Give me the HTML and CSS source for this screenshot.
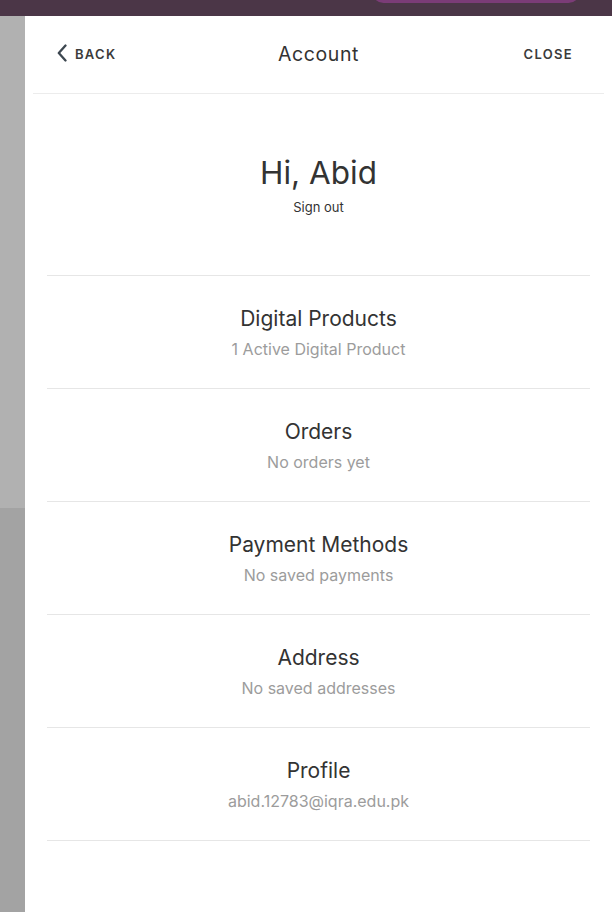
FILE: index.html
```html
<!DOCTYPE html>
<html lang="en">
<head>
    <meta charset="UTF-8">
    <meta name="viewport" content="width=device-width, initial-scale=1.0">
    <title>Account</title>

    <link rel="stylesheet" href="styles.css">
</head>
<body>
    <div class="topbar">
        <div class="topbar-pill"></div>
    </div>

    <div class="layout">
        <div class="backdrop">
            <div class="backdrop-top"></div>
            <div class="backdrop-bottom"></div>
        </div>

        <div class="panel">
            <div class="panel-header">
                <a class="nav-link back" href="#">
                    <svg class="chevron" width="10" height="18" viewBox="0 0 10 18">
                        <path d="M8.5 1.5 L1.8 9 L8.5 16.5" fill="none" stroke="#3d4750" stroke-width="2.3" stroke-linecap="round" stroke-linejoin="round"/>
                    </svg>
                    BACK
                </a>
                <h2 class="panel-title">Account</h2>
                <a class="nav-link close" href="#">CLOSE</a>
            </div>

            <div class="greeting">
                <h1>Hi, Abid</h1>
                <a class="sign-out" href="#">Sign out</a>
            </div>

            <ul class="account-list">
                <li class="account-item">
                    <div class="item-title">Digital Products</div>
                    <div class="item-sub">1 Active Digital Product</div>
                </li>
                <li class="account-item">
                    <div class="item-title">Orders</div>
                    <div class="item-sub">No orders yet</div>
                </li>
                <li class="account-item">
                    <div class="item-title">Payment Methods</div>
                    <div class="item-sub">No saved payments</div>
                </li>
                <li class="account-item">
                    <div class="item-title">Address</div>
                    <div class="item-sub">No saved addresses</div>
                </li>
                <li class="account-item">
                    <div class="item-title">Profile</div>
                    <div class="item-sub">abid.12783@iqra.edu.pk</div>
                </li>
            </ul>
        </div>
    </div>
</body>
</html>
```

FILE: styles.css
```css
body {
    margin: 0;
    font-family: Inter, "Liberation Sans", sans-serif;
    color: #383838;
    background-color: #4b3647;
    height: 912px;
    overflow: hidden;
}

.topbar {
    height: 16px;
    background-color: #4b3647;
    position: relative;
}

.topbar-pill {
    position: absolute;
    left: 372px;
    top: -20px;
    width: 208px;
    height: 23px;
    border-radius: 12px;
    background-color: #7b3c77;
}

.layout {
    display: flex;
    height: 896px;
}

.backdrop {
    width: 25px;
    display: flex;
    flex-direction: column;
}

.backdrop-top {
    height: 492px;
    background-color: #b1b1b1;
}

.backdrop-bottom {
    flex: 1;
    background-color: #a3a3a3;
}

.panel {
    flex: 1;
    background-color: white;
}

/* three columns so the title stays centred on the panel */
.panel-header {
    display: grid;
    grid-template-columns: 1fr auto 1fr;
    align-items: center;
    height: 75px;
    padding-bottom: 2px;
    margin: 0 8px;
    border-bottom: 1px solid #ececec;
}

.nav-link {
    display: flex;
    align-items: center;
    gap: 8px;
    font-size: 13px;
    font-weight: 600;
    letter-spacing: 1.3px;
    color: #3b3b3b;
    text-decoration: none;
}

.back {
    justify-self: start;
    padding-left: 24px;
}

.close {
    justify-self: end;
    padding-right: 31px;
}

.chevron {
    margin-bottom: 1px;
}

.panel-title {
    margin: 0;
    font-size: 19.5px;
    font-weight: 400;
    letter-spacing: 0.6px;
    color: #333;
}

.greeting {
    text-align: center;
    padding-top: 60px;
    height: 121px;
    margin: 0 22px;
    border-bottom: 1px solid #e6e6e6;
}

.greeting h1 {
    margin: 0;
    font-size: 31.5px;
    font-weight: 400;
    line-height: 38px;
    color: #333;
}

.sign-out {
    display: block;
    margin-top: 7px;
    font-size: 13px;
    color: #333;
    text-decoration: none;
}

.account-list {
    list-style: none;
    margin: 0 22px;
    padding: 0;
}

.account-item {
    height: 112px;
    border-bottom: 1px solid #e6e6e6;
    text-align: center;
}

.item-title {
    padding-top: 30px;
    font-size: 21px;
    line-height: 26px;
    color: #333;
}

.item-sub {
    margin-top: 7px;
    font-size: 16px;
    line-height: 20px;
    color: #9c9c9c;
}
```
